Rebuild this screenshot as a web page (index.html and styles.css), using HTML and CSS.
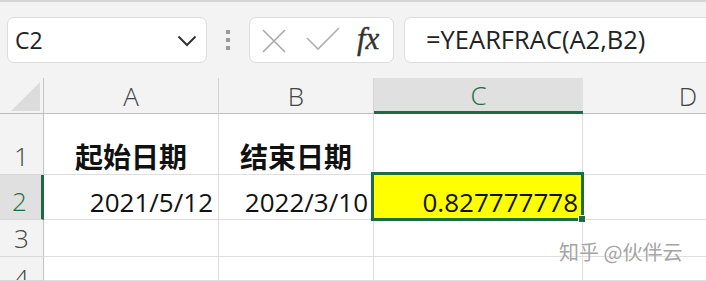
FILE: index.html
```html
<!DOCTYPE html>
<html lang="zh">
<head>
<meta charset="utf-8">
<title>YEARFRAC</title>
<link rel="stylesheet" href="styles.css">
</head>
<body>
<div class="toolbar">
  <div class="namebox">
    <span class="name">C2</span>
    <svg class="chev" width="20" height="12" viewBox="0 0 20 12"><polyline points="1.5,1.5 10,10 18.5,1.5" fill="none" stroke="#333" stroke-width="2"/></svg>
  </div>
  <div class="dots"><i></i><i></i><i></i></div>
  <div class="btnbox">
    <svg class="xicon" width="26" height="26" viewBox="0 0 26 26"><path d="M2 2L24 24M24 2L2 24" stroke="#a8a8a8" stroke-width="1.6" fill="none"/></svg>
    <svg class="check" width="34" height="24" viewBox="0 0 34 24"><polyline points="1,11 12,22 33,1" fill="none" stroke="#b0b0b0" stroke-width="1.6"/></svg>
    <span class="fx">fx</span>
  </div>
  <div class="formula">=YEARFRAC(A2,B2)</div>
</div>
<div class="sheet">
  <div class="corner"><svg width="30" height="31" viewBox="0 0 30 31"><polygon points="29,1 29,30 0,30" fill="#dcdcdc"/></svg></div>
  <div class="colhead">A</div>
  <div class="colhead">B</div>
  <div class="colhead sel">C</div>
  <div class="colhead last">D</div>

  <div class="rowhead">1</div>
  <div class="cell center bold">起始日期</div>
  <div class="cell center bold">结束日期</div>
  <div class="cell"></div>
  <div class="cell last"></div>

  <div class="rowhead sel">2</div>
  <div class="cell right">2021/5/12</div>
  <div class="cell right">2022/3/10</div>
  <div class="cell right active">0.827777778</div>
  <div class="cell last"></div>

  <div class="rowhead">3</div>
  <div class="cell"></div>
  <div class="cell"></div>
  <div class="cell"></div>
  <div class="cell last"></div>

  <div class="rowhead r4">4</div>
  <div class="cell"></div>
  <div class="cell"></div>
  <div class="cell"></div>
  <div class="cell last"></div>
</div>
<div class="watermark">知乎 @伙伴云</div>
</body>
</html>
```
FILE: styles.css
```css
html, body {
  margin: 0;
  padding: 0;
}
body {
  width: 706px;
  height: 281px;
  overflow: hidden;
  background: #f3f3f3;
  font-family: "Open Sans", "Noto Sans CJK SC", sans-serif;
  color: #222;
  position: relative;
}
.toolbar {
  display: flex;
  align-items: flex-start;
  height: 78px;
  box-sizing: border-box;
  border-top: 2px solid #d6d6d6;
  padding: 15px 0 0 7px;
  overflow: hidden;
}
.toolbar > * {
  flex: none;
}
.namebox {
  width: 200px;
  height: 46px;
  box-sizing: border-box;
  background: #fff;
  border: 1px solid #dcdcdc;
  border-radius: 7px;
  display: flex;
  align-items: center;
  justify-content: space-between;
  padding: 0 9px 0 7px;
}
.name {
  font-size: 23px;
  color: #222;
}
.chev {
  margin-top: 2px;
}
.dots {
  margin: 13px 0 0 19px;
  width: 4px;
  display: flex;
  flex-direction: column;
  gap: 4px;
}
.dots i {
  display: block;
  width: 4px;
  height: 4px;
  background: #9a9a9a;
}
.btnbox {
  margin-left: 19px;
  width: 145px;
  height: 46px;
  box-sizing: border-box;
  background: #fff;
  border: 1px solid #dcdcdc;
  border-radius: 7px;
  display: flex;
  align-items: center;
  padding-left: 11px;
}
.xicon { margin-top: 1px; }
.check { margin-left: 19px; margin-top: -2px; }
.fx {
  margin-left: 17px;
  font-family: "Liberation Serif", "DejaVu Serif", serif;
  font-style: italic;
  font-size: 31px;
  color: #333;
  line-height: 1;
  margin-top: -4px;
  -webkit-text-stroke: 0.4px #333;
}
.formula {
  margin-left: 10px;
  width: 320px;
  height: 46px;
  box-sizing: border-box;
  background: #fff;
  border: 1px solid #dcdcdc;
  border-radius: 7px;
  font-size: 25.5px;
  padding-left: 21px;
  line-height: 43px;
  color: #222;
  white-space: nowrap;
}
.sheet {
  display: grid;
  grid-template-columns: 44px 175px 155px 209px 210px;
  grid-template-rows: 36px 61px 45px 37px 24px;
  width: 793px;
}
.sheet > div {
  box-sizing: border-box;
}
.corner {
  border-right: 1px solid #c4c4c4;
  border-bottom: 1px solid #bdbdbd;
  padding: 3px 0 0 11px;
}
.corner svg { display: block; }
.colhead {
  border-right: 1px solid #d4d4d4;
  border-bottom: 1px solid #bdbdbd;
  display: flex;
  align-items: center;
  justify-content: center;
  font-size: 26px;
  font-weight: 300;
  color: #444;
  padding-top: 1px;
}
.colhead.sel {
  background: #e0e0e0;
  color: #1d6b40;
  border-bottom: 3px solid #1d6b40;
  border-right: none;
}
.colhead.last { border-right: none; }
.rowhead {
  border-right: 1px solid #c4c4c4;
  border-bottom: 1px solid #d8d8d8;
  display: flex;
  align-items: flex-end;
  justify-content: center;
  font-size: 26px;
  font-weight: 300;
  color: #444;
  line-height: 1;
  padding-bottom: 5px;
}
.rowhead.r4 {
  align-items: flex-start;
  padding-top: 8px;
  overflow: hidden;
}
.rowhead.sel {
  background: #e0e0e0;
  color: #1d6b40;
  border-right: 3px solid #1d6b40;
  padding-right: 2px;
}
.cell {
  background: #fff;
  border-right: 1px solid #dedede;
  border-bottom: 1px solid #dedede;
  display: flex;
  align-items: flex-end;
  font-size: 26px;
  line-height: 1;
  color: #111;
  padding: 0 5px 4px 5px;
  white-space: nowrap;
}
.cell.last { border-right: none; }
.center { justify-content: center; }
.right { justify-content: flex-end; }
.bold {
  font-weight: bold;
  font-size: 28px;
  padding-bottom: 3px;
}
.active {
  background: #ffff00;
  position: relative;
  padding-right: 4px;
}
.active::after {
  content: "";
  position: absolute;
  top: -3px;
  left: -3px;
  right: -2px;
  bottom: -2px;
  border: 3px solid #1d6b40;
}
.active::before {
  content: "";
  position: absolute;
  right: -3px;
  bottom: -3px;
  width: 6px;
  height: 6px;
  background: #1d6b40;
  z-index: 1;
  box-shadow: 0 0 0 1px #fff;
}
.watermark {
  position: absolute;
  left: 559px;
  top: 237px;
  font-family: "Noto Sans CJK SC", sans-serif;
  font-size: 20px;
  color: #a5a5a5;
  text-shadow: 0 0 2px #fff;
}
```
